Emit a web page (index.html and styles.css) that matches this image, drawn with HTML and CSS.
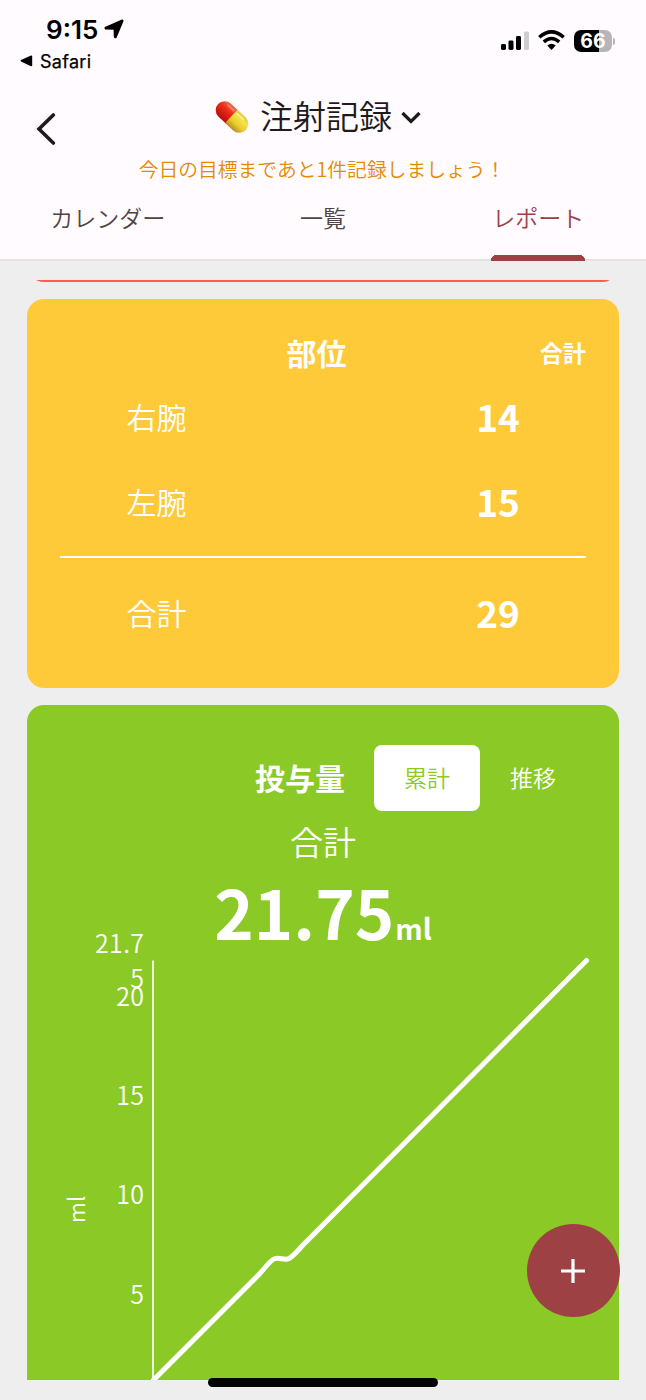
FILE: index.html
```html
<!DOCTYPE html>
<html lang="ja">
<head>
<meta charset="utf-8">
<title>注射記録</title>
<link rel="stylesheet" href="styles.css">
</head>
<body>
<div class="screen">
  <header class="top">
    <div class="status">
      <div class="status-left">
        <div class="clock"><span>9:15</span>
          <svg width="20" height="20" viewBox="0 0 20 20"><path d="M18 2 2 9.100 11 9.300 11.300 17.800Z" stroke="#000" stroke-width="3" stroke-linejoin="round"/></svg>
        </div>
        <div class="back-app"><svg width="13" height="12" viewBox="0 0 13 12"><path d="M11 .6 1 5Q0 5.700 1 6.400L11 11.200Q12.200 11.600 12.200 10.300V1.500Q12.200.2 11 .6Z"/></svg><span>Safari</span></div>
      </div>
      <div class="status-right">
        <svg width="29" height="20" viewBox="0 0 29 20"><rect x="1" y="14" width="5" height="6" rx="1.400"/><rect x="8.500" y="10.500" width="5" height="9.500" rx="1.400"/><rect x="16" y="6" width="5" height="14" rx="1.400"/><rect x="24" y="1.500" width="5" height="18.500" rx="1.400" fill="#cfcbcf"/></svg>
        <svg class="wifi" width="27" height="20" viewBox="0 0 27 20"><g fill="none" stroke="#000" stroke-width="3.500"><path d="M1.300 7.200Q13.500-3.500 25.700 7.200"/><path d="M5.800 11.900Q13.500 5.100 21.200 11.900"/></g><path d="M9.300 15.500Q13.500 12.100 17.700 15.500L13.500 19.900Z"/></svg>
        <div class="battery"><span>66</span></div><i class="battery-tip"></i>
      </div>
    </div>
    <div class="nav">
      <svg class="nav-back" width="20" height="32" viewBox="0 0 20 32"><path d="M17.300 2 3 16 17.300 30" fill="none" stroke="#201a1b" stroke-width="3.600" stroke-linecap="round"/></svg>
      <div class="titles">
        <h1>
          <svg class="pill" width="34" height="34" viewBox="0 0 34 34">
            <defs>
              <linearGradient id="red" x1="0" y1="1" x2="0" y2="0"><stop offset="0" stop-color="#b90e0c"/><stop offset=".6" stop-color="#ed2c1b"/><stop offset="1" stop-color="#e96d50"/></linearGradient>
              <linearGradient id="yellow" x1="0" y1="1" x2="0" y2="0"><stop offset="0" stop-color="#b28c20"/><stop offset=".35" stop-color="#e8cb2d"/><stop offset=".75" stop-color="#f5e34a"/><stop offset="1" stop-color="#d8c735"/></linearGradient>
            </defs>
            <g transform="rotate(43 17 17)"><path d="M17 8H7a9 9 0 0 0 0 18H17Z" fill="url(#red)"/><path d="M16 8H27a9 9 0 0 1 0 18H16Z" fill="url(#yellow)"/><path d="M6 11H14" stroke="#f4836b" stroke-width="1.600" stroke-linecap="round"/><path d="M18 11H27" stroke="#fcf39b" stroke-width="1.600" stroke-linecap="round"/></g>
          </svg>
          <span>注射記録</span>
          <svg class="down" width="20" height="14" viewBox="0 0 20 14"><path d="M1.500 3 10 11.500 18.500 3" fill="none" stroke="#201a1b" stroke-width="3.200"/></svg>
        </h1>
        <p>今日の目標まであと1件記録しましょう！</p>
      </div>
    </div>
    <nav class="tabs">
      <a class="tab">カレンダー</a>
      <a class="tab">一覧</a>
      <a class="tab active">レポート</a>
    </nav>
  </header>

  <main class="report">
    <div class="scroll">
      <div class="previous"></div>
      <section class="card sites">
        <div class="sites-head"><h2>部位</h2><span>合計</span></div>
        <div class="row"><span>右腕</span><b>14</b></div>
        <div class="row"><span>左腕</span><b>15</b></div>
        <div class="row total"><span>合計</span><b>29</b></div>
      </section>
      <section class="card dose">
        <div class="dose-head"><h2>投与量</h2><span class="choice on">累計</span><span class="choice">推移</span></div>
        <div class="dose-label">合計</div>
        <div class="dose-value">21.75<small>ml</small></div>
        <svg class="chart" width="592" height="455" viewBox="27 925 592 455">
          <g class="ticks" text-anchor="end">
            <text x="144.500" y="952.500">21.7</text>
            <text x="144.500" y="987.500">5</text>
            <text x="144.500" y="1005.500">20</text>
            <text x="144.500" y="1104.500">15</text>
            <text x="144.500" y="1204">10</text>
            <text x="144.500" y="1303.500">5</text>
            <text class="unit" x="0" y="0" text-anchor="start" transform="translate(84.500 1223) rotate(-90)">ml</text>
          </g>
          <path d="M153 960.500V1380" stroke="#fff" stroke-width="1.700"/>
          <path d="M153.500 1380 258 1275.500C266 1267 269 1262 273 1259.500C278 1256 284 1261 289 1258.500C294 1256 299 1249 304 1244L586.500 960.500" fill="none" stroke="#fff" stroke-width="5" stroke-linecap="round" stroke-linejoin="round"/>
        </svg>
      </section>
    </div>
  </main>
  <button class="add" aria-label="追加"><svg width="24" height="24" viewBox="0 0 24 24"><path d="M12 0V24M0 12H24" stroke="#fff" stroke-width="3.200"/></svg></button>
  <div class="home"></div>
</div>
</body>
</html>
```
FILE: styles.css
```css
* { box-sizing: border-box; }
body { margin: 0; }
h1, h2, p { margin: 0; }
svg { display: block; flex: none; }
.screen {
  position: relative;
  width: 646px;
  height: 1400px;
  overflow: hidden;
  background: #eee;
  font-family: "Noto Sans CJK JP", sans-serif;
  font-weight: 350;
}
.top { height: 261px; background: #fffbff; border-bottom: 2px solid #ecdfe1; }
.status {
  height: 76px;
  display: flex;
  justify-content: space-between;
  font-family: Inter, sans-serif;
  color: #000;
}
.status-left { padding: 14px 0 0 20px; }
.clock { display: flex; align-items: center; gap: 6px; padding-left: 26px; height: 30px; font-size: 26px; font-weight: 600; }
.back-app { display: flex; align-items: center; gap: 7px; height: 34px; font-size: 18px; font-weight: 400; letter-spacing: .3px; -webkit-text-stroke: .25px #000; }
.status-right { display: flex; height: 52px; padding: 30px 31px 0 0; }
.wifi { margin-left: 9px; }
.battery {
  width: 38px;
  height: 22px;
  margin-left: 9px;
  border-radius: 7px;
  background: linear-gradient(90deg, #000 66%, #b7b5b8 66%);
  color: #fff;
  font-size: 19.5px;
  font-weight: 700;
  line-height: 23px;
  text-align: center;
}
.battery-tip { width: 2px; height: 7px; margin: 8px 0 0 1px; border-radius: 0 3px 3px 0; background: #b7b5b8; }
.nav { display: grid; grid-template-columns: 80px 1fr 80px; height: 116px; }
.nav-back { margin: 37px 0 0 36px; }
.titles { display: flex; flex-direction: column; align-items: center; padding: 19px 6px 0 0; }
h1 { display: flex; align-items: center; height: 44px; font-size: 33px; font-weight: 350; color: #201a1b; padding-right: 4px; white-space: nowrap; }
h1 span { height: 44px; margin: 0 9px 0 11px; line-height: 41px; }
.titles p { margin-top: 15px; font-size: 19.8px; line-height: 30px; color: #e58a00; white-space: nowrap; padding-left: 4px; }
.tabs { display: grid; grid-template-columns: repeat(3, 1fr); height: 69px; }
.tab { display: flex; justify-content: center; height: 69px; font-size: 23px; line-height: 50px; color: #524345; }
.active {
  width: 94px;
  justify-self: center;
  color: #9e4145;
  background: radial-gradient(circle at 6px 6px, #9e4145 6px, transparent 6.5px) 0 63px / 12px 6px no-repeat, radial-gradient(circle at 6px 6px, #9e4145 6px, transparent 6.5px) 82px 63px / 12px 6px no-repeat, linear-gradient(#9e4145, #9e4145) 6px 63px / 82px 6px no-repeat;
}
.report { padding: 19px 27px 0; height: 1119px; }
.scroll { height: 1100px; overflow: hidden; display: flex; flex-direction: column; }
.previous { flex: none; height: 60px; margin-top: -58px; border-radius: 17px; background: #ff5a57; }
.card { flex: none; margin-top: 17px; border-radius: 17px; color: #fff; }
.sites { height: 389px; background: #ffca39; padding: 31px 33px 0; }
.sites-head { display: grid; grid-template-columns: 1fr auto 1fr; align-items: center; height: 44px; }
h2 { font-size: 30px; line-height: 44px; font-weight: 700; }
.sites-head h2 { grid-column: 2; padding-right: 13px; }
.sites-head span { justify-self: end; font-size: 23px; font-weight: 700; }
.row { display: grid; grid-template-columns: 193px 1fr; height: 85px; line-height: 84px; font-size: 30px; text-align: center; }
.row b { font-size: 37px; font-weight: 700; padding-left: 157px; text-align: center; }
.total { margin-top: 12px; border-top: 2px solid #fff; height: 112px; line-height: 108px; }
.dose { height: 800px; background: #8bc926; }
.dose-head { display: flex; justify-content: flex-end; align-items: center; padding: 40px 33px 0 0; height: 106px; }
.dose-head h2 { margin-right: 29px; line-height: 42px; height: 44px; }
.choice { width: 106px; height: 66px; line-height: 64px; border-radius: 8px; text-align: center; font-size: 23px; }
.on { background: #fff; color: #8bc926; }
.dose-label { height: 60px; line-height: 60px; font-size: 33px; text-align: center; }
.dose-value { height: 54px; line-height: 79px; font-size: 67px; font-weight: 700; text-align: center; }
.dose-value small { margin-left: 1px; font-size: 28.5px; }
.chart { overflow: visible; }
.ticks { fill: #fff; font-size: 25px; letter-spacing: .4px; }
.unit { font-size: 22.5px; }
.add {
  position: absolute;
  left: 527px;
  top: 1224px;
  width: 92.5px;
  height: 93px;
  display: grid;
  place-items: center;
  padding: 0;
  border: 0;
  border-radius: 50%;
  background: #9e4145;
}
.home { position: absolute; left: 208px; top: 1378px; width: 230px; height: 9px; border-radius: 5px; background: #000; }
```
